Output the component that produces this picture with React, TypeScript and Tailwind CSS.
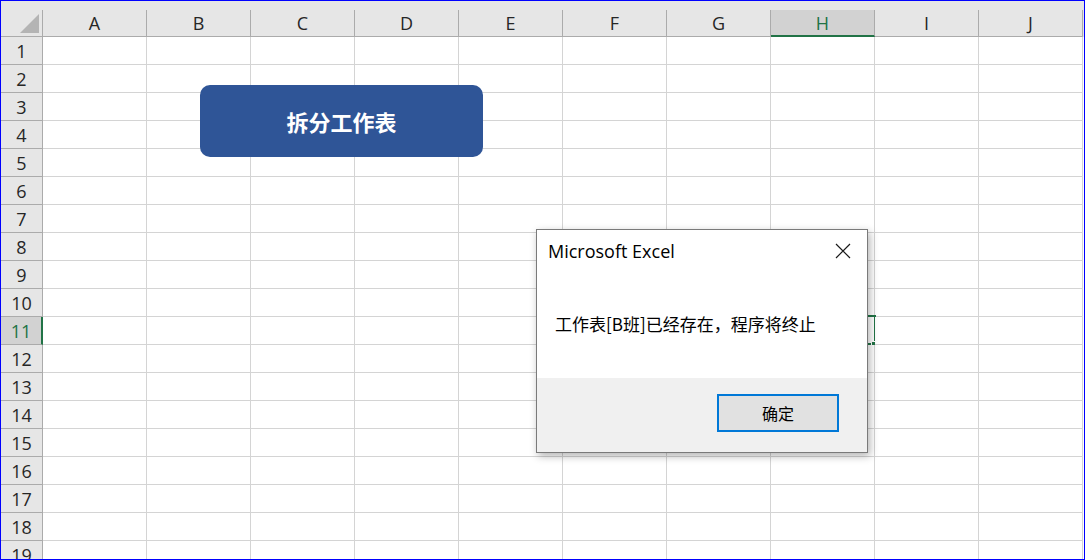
import React from 'react';

const cols = ['A', 'B', 'C', 'D', 'E', 'F', 'G', 'H', 'I', 'J'];
const rows = Array.from({ length: 19 }, (_, i) => i + 1);

const hdrFont = { fontFamily: '"Open Sans", "Noto Sans", sans-serif' };
const cjk = '"Noto Sans CJK SC", sans-serif';

function ColumnHeader() {
  return (
    <div className="flex h-[36px] bg-[#e6e6e6] pt-[9px]">
      {/* corner cell with the select-all triangle */}
      <div className="relative w-[42px] shrink-0 border-b border-r border-[#ababab]">
        <svg className="absolute right-[3px] bottom-[3px]" width="19" height="19" viewBox="0 0 19 19">
          <polygon points="19,0 19,19 0,19" fill="#b4b4b4" />
        </svg>
      </div>
      {cols.map((c) => (
        <div
          key={c}
          style={hdrFont}
          className={`flex w-[104px] shrink-0 items-center justify-center border-r text-[18px] leading-none ${
            c === 'H'
              ? 'border-b-2 border-r-[#ababab] border-b-[#217346] bg-[#d2d2d2] text-[#217346]'
              : 'border-b border-[#ababab] text-[#262626]'
          }`}
        >
          {c}
        </div>
      ))}
    </div>
  );
}

function Row({ n }: { n: number }) {
  const selected = n === 11;
  return (
    <div className="flex h-[28px]">
      <div
        style={hdrFont}
        className={`flex w-[42px] shrink-0 items-center justify-center border-b border-[#ababab] text-[18px] leading-none ${
          selected
            ? 'border-r-2 border-r-[#217346] bg-[#d2d2d2] text-[#217346]'
            : 'border-r bg-[#e6e6e6] text-[#262626]'
        }`}
      >
        {n}
      </div>
      {cols.map((c) => (
        <div key={c} className="relative w-[104px] shrink-0 border-b border-r border-[#d4d4d4] bg-white">
          {selected && c === 'H' && (
            <>
              <div className="absolute -top-[2px] -left-[1px] h-[30px] w-[106px] border-2 border-[#217346]" />
              <div className="absolute -right-[4px] -bottom-[4px] h-[7px] w-[7px] border border-white bg-[#217346]" />
            </>
          )}
        </div>
      ))}
    </div>
  );
}

function MessageBox() {
  return (
    <div className="absolute left-[535px] top-[228px] flex h-[224px] w-[332px] flex-col border border-[#7a7a7a] bg-white shadow-[2px_3px_8px_rgba(0,0,0,0.3)]">
      <div className="flex h-[44px] items-center justify-between pl-[11px] pr-[16px] pb-[2px]">
        <span style={{ fontFamily: '"Open Sans", "Noto Sans", sans-serif' }} className="text-[18px] text-black">
          Microsoft Excel
        </span>
        <svg width="16" height="16" viewBox="0 0 16 16">
          <path d="M1 1 L15 15 M15 1 L1 15" stroke="#1a1a1a" strokeWidth="1.2" />
        </svg>
      </div>
      <div className="flex h-[104px] items-center pl-[18px] pb-[4px]">
        <span style={{ fontFamily: cjk }} className="text-[17px] text-black">
          工作表[B班]已经存在，程序将终止
        </span>
      </div>
      <div className="flex flex-1 items-start justify-end bg-[#f0f0f0] pt-[16px] pr-[28px]">
        <div
          style={{ fontFamily: cjk }}
          className="flex h-[38px] w-[122px] items-center justify-center border-2 border-[#0078d7] bg-[#e1e1e1] text-[16px] text-black"
        >
          确定
        </div>
      </div>
    </div>
  );
}

export default function App() {
  return (
    <div className="relative h-[560px] w-[1085px] overflow-hidden border border-[#0000ff] bg-white">
      <ColumnHeader />
      {rows.map((n) => (
        <Row key={n} n={n} />
      ))}

      {/* shape button sitting on the sheet */}
      <div
        style={{ fontFamily: cjk }}
        className="absolute left-[199px] top-[84px] flex h-[72px] w-[283px] items-center justify-center rounded-[10px] bg-[#2f5597] text-[22px] font-bold text-white"
      >
        拆分工作表
      </div>

      <MessageBox />
    </div>
  );
}
